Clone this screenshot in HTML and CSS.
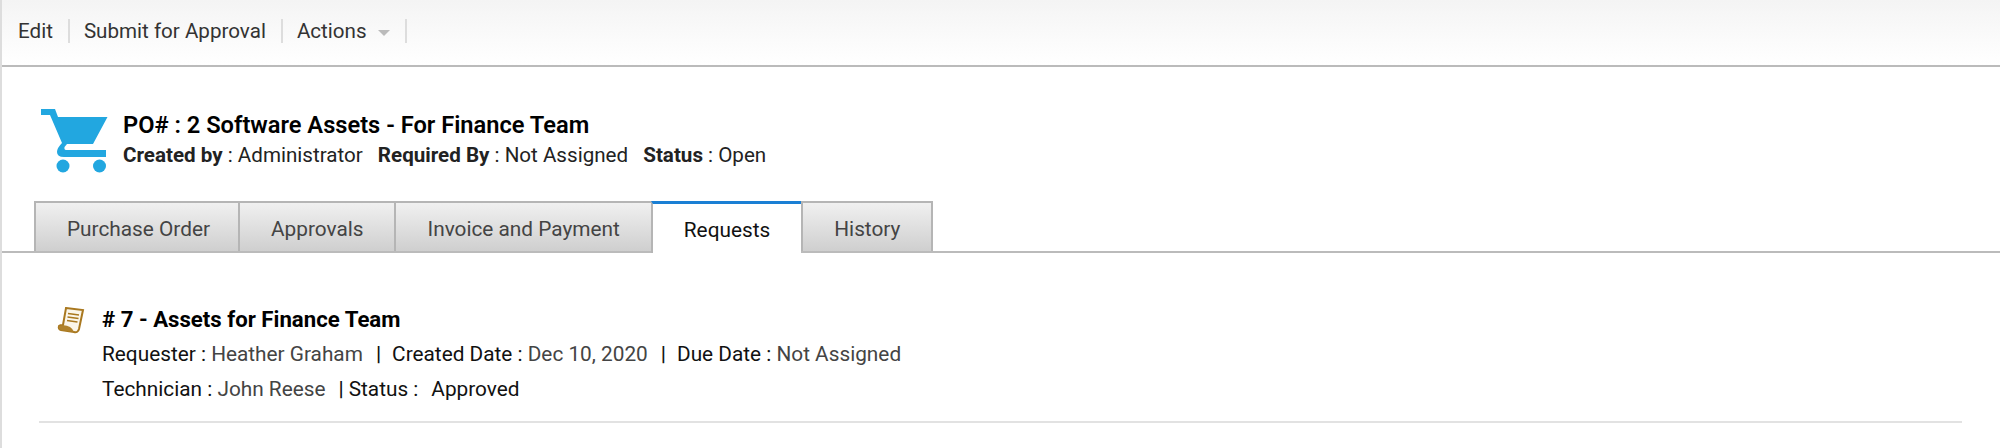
FILE: index.html
```html
<!DOCTYPE html>
<html lang="en">
<head>
    <meta charset="UTF-8">
    <meta name="viewport" content="width=device-width, initial-scale=1.0">
    <title>Purchase Order</title>
    <link rel="stylesheet" href="styles.css">
</head>
<body>
    <header class="toolbar">
        <a class="tool">Edit</a>
        <a class="tool">Submit for Approval</a>
        <a class="tool">Actions <span class="caret"></span></a>
    </header>

    <section class="po-head">
        <svg class="cart-icon" width="68" height="68" viewBox="0 0 68 68">
            <path d="M1 2H15L18 10H67.500L53 37H27L24.500 40Q24 43 26 43H66V50H24Q17 50 17 45Q17 41 22 36L10 8H1Z" fill="#22a7e0"/>
            <circle cx="23" cy="59" r="6.500" fill="#22a7e0"/>
            <circle cx="59.500" cy="59" r="6.500" fill="#22a7e0"/>
        </svg>
        <div>
            <h1 class="po-title">PO# : 2 Software Assets - For Finance Team</h1>
            <p class="po-meta"><b>Created by</b> : Administrator <b class="gap">Required By</b> : Not Assigned <b class="gap">Status</b> : Open</p>
        </div>
    </section>

    <nav class="tabs">
        <a class="tab">Purchase Order</a>
        <a class="tab">Approvals</a>
        <a class="tab">Invoice and Payment</a>
        <a class="tab active">Requests</a>
        <a class="tab">History</a>
    </nav>

    <section class="request">
        <svg class="req-icon" width="28" height="28" viewBox="0 0 28 28">
            <path d="M9 2L26 4L22 23Q21 27 17 26L4 24Q1 23 2 20Q3 19 6 19Z" fill="#fbf6ea" stroke="#a9781f" stroke-width="2"/>
            <path d="M2 20Q8 18 13 21Q16 23 17 26L4 24Q1 23 2 20Z" fill="#b0822c"/>
            <path d="M11 7.500L22 9M10.500 11L21.500 12.500M10 14.500L20.500 16" stroke="#a9781f" stroke-width="1.500"/>
        </svg>
        <div>
            <h2 class="req-title"># 7 - Assets for Finance Team</h2>
            <p class="req-line">Requester : <span class="val">Heather Graham</span><span class="sep">|</span>Created Date : <span class="val">Dec 10, 2020</span><span class="sep">|</span>Due Date : <span class="val">Not Assigned</span></p>
            <p class="req-line">Technician : <span class="val">John Reese</span><span class="sep2">|</span>Status :<span class="approved">Approved</span></p>
        </div>
    </section>
    <hr class="rule">
</body>
</html>
```

FILE: styles.css
```css
body {
    margin: 0;
    height: 448px;
    overflow: hidden;
    background-color: #fff;
    border-left: 2px solid #ddd;
    font-family: Roboto, sans-serif;
    font-size: 20.6px;
    color: #111;
}

.toolbar {
    display: flex;
    align-items: center;
    height: 67px;
    padding: 0 0 4px 16px;
    box-sizing: border-box;
    background: linear-gradient(#f4f4f4, #fff);
    border-bottom: 2px solid #bbb;
    color: #333;
}

.tool {
    display: flex;
    align-items: center;
    height: 24px;
    padding-right: 15px;
    margin-right: 14px;
    border-right: 2px solid #ddd;
}

.caret {
    width: 0;
    height: 0;
    margin-left: 11px;
    margin-top: 5px;
    border-left: 6px solid transparent;
    border-right: 6px solid transparent;
    border-top: 6px solid #bbb;
}

.po-head {
    display: flex;
    align-items: flex-start;
    height: 134px;
    padding: 40px 0 0 38px;
    box-sizing: border-box;
}

.cart-icon {
    margin-right: 15px;
}

.po-title {
    margin: 4px 0 0;
    font-size: 23.65px;
    line-height: 28px;
    font-weight: 600;
    color: #000;
}

.po-meta {
    margin: 3px 0 0;
    line-height: 26px;
    color: #222;
}

.gap {
    margin-left: 10px;
}

.tabs {
    display: flex;
    height: 50px;
    padding-left: 32px;
    border-bottom: 2px solid #bbb;
    font-size: 20.8px;
}

.tab {
    display: flex;
    align-items: center;
    justify-content: center;
    height: 50px;
    padding: 3px 31px 0;
    border: 2px solid #b5b5b5;
    border-right-width: 0;
    border-bottom: 0;
    background: linear-gradient(#f0f0f0, #cfcfcf);
    color: #444;
    box-sizing: border-box;
}

.tab:first-child {
    padding-right: 28px;
}

.tab:last-child {
    border-right-width: 2px;
}

.tab.active {
    height: 52px;
    background: #fff;
    color: #111;
    border-top: 3px solid #1a7fd4;
}

.request {
    display: flex;
    align-items: flex-start;
    padding: 53px 0 0 55px;
}

.req-icon {
    margin-right: 17px;
}

.req-title {
    margin: 0;
    font-size: 22.2px;
    line-height: 26px;
    color: #000;
}

.req-line {
    margin: 10px 0 0;
    line-height: 25px;
    font-size: 20.8px;
    color: #111;
}

.val {
    color: #444;
}

.sep {
    margin: 0 11px 0 13px;
    font-weight: 500;
}

.sep2 {
    margin: 0 5px 0 13px;
    font-weight: 500;
}

.approved {
    margin-left: 13px;
}

.rule {
    margin: 19px 38px 0 37px;
    border: 0;
    border-top: 2px solid #e2e2e2;
}
```
